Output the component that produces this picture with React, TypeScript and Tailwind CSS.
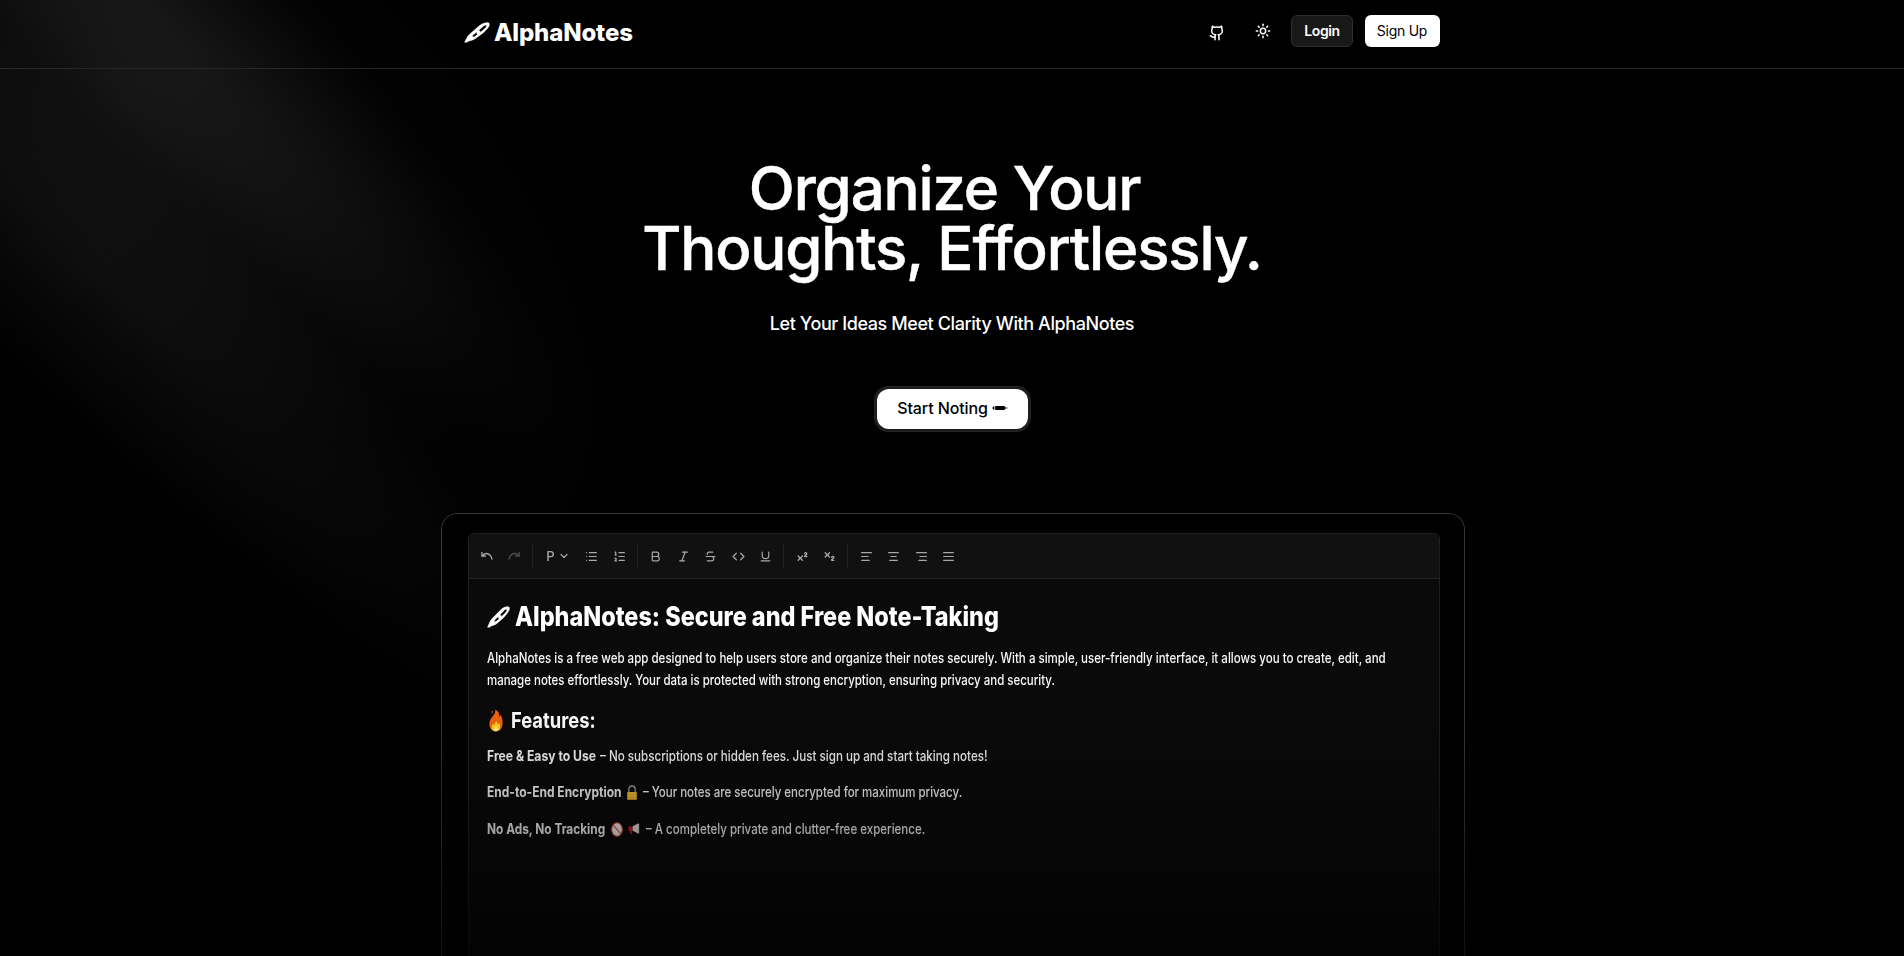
import type { ReactNode } from "react";
import {
  AlignCenter,
  AlignJustify,
  AlignLeft,
  AlignRight,
  Bold,
  ChevronDown,
  Code,
  Github,
  Italic,
  List,
  ListOrdered,
  Strikethrough,
  Subscript,
  Sun,
  Superscript,
  Underline,
} from "lucide-react";

function PenIcon({ className }: { className: string }) {
  return (
    <svg viewBox="0 0 26 21" preserveAspectRatio="none" className={className} aria-hidden="true">
      <path
        fill="currentColor"
        stroke="currentColor"
        strokeWidth="0.2"
        strokeLinejoin="round"
        fillRule="evenodd"
        d="M0.4 20.3L2.8 15.8C3.4 14.2 4.6 13 6 11.8L15.4 3.6C18.2 1.4 21.4 0.3 23.8 0.5C25.7 0.8 25.9 2.5 25.2 3.9C24 6.3 21.2 9.3 18.6 11.4L11 17C8.6 18.4 6.8 18.8 5.2 19L2.4 20.5ZM8.6 13.5C8.2 14.8 9.4 15.2 10.7 14.4L13.6 12.3C12.8 11.8 12.4 11.2 12.9 10ZM14.6 8.6C15.9 8.4 16.5 9.2 16.2 10.2L21 6.2C22.2 5 22.8 3.8 22.2 3.3C21.3 2.8 19.7 3.9 18.6 4.9Z"
      />
    </svg>
  );
}

function FlatPenIcon() {
  return (
    <svg viewBox="0 0 16 6" className="h-1.5 w-4" aria-hidden="true">
      <path fill="currentColor" d="M0.3 3L1.6 1.2H2.4V4.8H1.6Z" />
      <rect x="3.2" y="1" width="9.6" height="4" fill="currentColor" />
      <path fill="currentColor" d="M13 1.8L14 2.4V3.6L13 4.2Z" />
      <rect x="14.6" y="2.5" width="1" height="1" fill="currentColor" />
    </svg>
  );
}

function FlameIcon() {
  return (
    <svg viewBox="0 0 14 23" className="h-[23px] w-3.5" aria-hidden="true">
      <path
        fill="#f0620f"
        d="M6.3 0.5C9.6 2.2 10.6 5 10.3 7.9C11 7.3 11.3 6.4 11.3 5.4C13 8 13.8 11 13.6 14.2C13.4 19.2 11 22.4 7 22.4C2.8 22.4 0.4 19.4 0.4 15.2C0.4 11.8 1.8 9.8 3.4 7.8C5.4 5.4 6.8 3.6 6.3 0.5Z"
      />
      <path fill="#d84a1b" d="M3 1.6L4 2.4L3.4 4.6L2.4 3.4Z" />
      <path
        fill="#ffd21f"
        d="M7.6 12.2C8.4 13.4 8.2 14.8 8.4 15.6C9 15.4 9.4 14.8 9.6 14C10.8 15.2 11.4 16.6 11.2 18.2C10.8 20.8 9.2 22.3 7 22.3C4.6 22.3 2.8 20.8 2.7 18.4C2.7 16.9 3.3 15.7 4 14.8C4.3 15.6 4.7 16 5.2 16.2C5.4 14.6 6.2 13.2 7.6 12.2Z"
      />
      <path fill="#fff3a0" d="M7 17.6C8.4 18.6 9 19.6 8.8 20.8C8.4 21.8 7.8 22.2 7 22.2C6 22.2 5 21.6 5 20.6C5 19.4 6 18.6 7 17.6Z" />
    </svg>
  );
}

function LockIcon() {
  return (
    <svg viewBox="0 0 10 15" className="h-[15px] w-2.5" aria-hidden="true">
      <path d="M1.8 8V4.6C1.8 2.4 3 1 5 1S8.2 2.4 8.2 4.6V8" fill="none" stroke="#a5a5a0" strokeWidth="1.3" />
      <rect x="0.2" y="7" width="9.6" height="7.8" rx="0.6" fill="#f2bd31" />
      <rect x="0.2" y="9.6" width="9.6" height="0.5" fill="#d9a828" />
      <rect x="0.2" y="12.2" width="9.6" height="0.5" fill="#d9a828" />
    </svg>
  );
}

function BanIcon() {
  return (
    <svg viewBox="0 0 12 15" className="h-[15px] w-3" aria-hidden="true">
      <ellipse cx="6" cy="7.5" rx="5.3" ry="6.7" fill="#f4f0ee" stroke="#d8513f" strokeWidth="1.1" />
      <path d="M2.2 3.2L9.8 11.8" stroke="#d8513f" strokeWidth="1.1" />
    </svg>
  );
}

function MegaphoneIcon() {
  return (
    <svg viewBox="0 0 12 12" className="h-3 w-3" aria-hidden="true">
      <path fill="#e6e3e0" d="M4.4 3.6L10 0.6V10.4L4.4 7.6Z" />
      <rect x="10" y="0.6" width="1.2" height="9.9" fill="#c9c5c2" />
      <path fill="#d8142c" d="M0.4 3.4H4.4V7.8H3.8V11H2V7.8H0.4Z" />
    </svg>
  );
}

function UndoArrow({ className }: { className?: string }) {
  return (
    <svg viewBox="0 0 12 12" className={`size-3 ${className ?? ""}`} fill="none" stroke="currentColor" strokeWidth="1.3" aria-hidden="true">
      <path d="M0.9 2V6H4.9" />
      <path d="M1 6C3 3.6 6 3 8.4 4.6C10 5.7 10.9 7.4 11.1 9.6" />
    </svg>
  );
}

function Tool({ children }: { children: ReactNode }) {
  return <button className="flex h-6 w-[27.5px] items-center justify-center">{children}</button>;
}

function Divider() {
  return <span className="mx-1 h-6 w-px bg-[#222]" />;
}

const icon = "size-[13px]";

function Toolbar() {
  return (
    <div className="flex h-[45px] items-center border-b border-[#232323] bg-[#111] pl-[4.25px] text-[#a8a8a8]">
      <Tool><UndoArrow /></Tool>
      <Tool><UndoArrow className="-scale-x-100 text-[#505050]" /></Tool>
      <Divider />
      <button className="flex h-6 w-[41px] items-center gap-[3px] pl-[9.5px] text-[13px] leading-6 font-medium">
        P
        <ChevronDown className="size-3" strokeWidth={2.4} />
      </button>
      <Tool><List className={icon} strokeWidth={2.2} /></Tool>
      <Tool><ListOrdered className={icon} strokeWidth={2.2} /></Tool>
      <Divider />
      <Tool><Bold className={icon} strokeWidth={2.2} /></Tool>
      <Tool><Italic className={icon} strokeWidth={2.2} /></Tool>
      <Tool><Strikethrough className={icon} strokeWidth={2.2} /></Tool>
      <Tool><Code className={icon} strokeWidth={2.2} /></Tool>
      <Tool><Underline className={icon} strokeWidth={2.2} /></Tool>
      <Divider />
      <Tool><Superscript className={icon} strokeWidth={2.4} /></Tool>
      <Tool><Subscript className={icon} strokeWidth={2.4} /></Tool>
      <Divider />
      <Tool><AlignLeft className={icon} strokeWidth={2.2} /></Tool>
      <Tool><AlignCenter className={icon} strokeWidth={2.2} /></Tool>
      <Tool><AlignRight className={icon} strokeWidth={2.2} /></Tool>
      <Tool><AlignJustify className={icon} strokeWidth={2.2} /></Tool>
    </div>
  );
}

function Glow() {
  return (
    <div aria-hidden="true" className="pointer-events-none absolute inset-0 overflow-hidden">
      <div className="absolute top-0 left-0 h-[1280px] w-[560px] translate-y-[-350px] -rotate-45 rounded-full bg-[radial-gradient(68.54%_68.72%_at_55.02%_31.46%,hsla(0,0%,85%,.08)_0,hsla(0,0%,55%,.02)_50%,hsla(0,0%,45%,0)_80%)]" />
      <div className="absolute top-0 left-0 h-[1280px] w-[240px] -rotate-45 rounded-full bg-[radial-gradient(50%_50%_at_50%_50%,hsla(0,0%,85%,.06)_0,hsla(0,0%,45%,.02)_80%,transparent_100%)] [translate:5%_-50%]" />
      <div className="absolute top-0 left-0 h-[1280px] w-[240px] translate-y-[-350px] -rotate-45 bg-[radial-gradient(50%_50%_at_50%_50%,hsla(0,0%,85%,.04)_0,hsla(0,0%,45%,.02)_80%,transparent_100%)]" />
    </div>
  );
}

function Header() {
  return (
    <header className="h-[69px] border-b border-[#262626] pt-[15px]">
      <div className="mx-auto flex w-[976px] items-start justify-between">
        <a className="flex h-8 items-center gap-[4px]">
          <PenIcon className="mt-0.5 h-[21px] w-[26px]" />
          <span className="pt-1 text-2xl font-extrabold tracking-[-0.15px]">AlphaNotes</span>
        </a>
        <div className="flex h-8 items-center">
          <Github className="mt-[3px] size-4" strokeWidth={2.3} />
          <Sun className="ml-[30px] size-4" strokeWidth={2.2} />
          <button className="ml-5 h-8 w-[62px] rounded-md border border-[#2e2e2e] bg-[#181818] text-sm font-semibold tracking-[-0.4px]">
            Login
          </button>
          <button className="ml-3 h-8 w-[75px] rounded-md bg-white pr-px text-sm tracking-[-0.25px] text-black">Sign Up</button>
        </div>
      </div>
    </header>
  );
}

function Editor() {
  return (
    <div className="ml-px w-[1024px] rounded-t-2xl border border-b-0 border-[#363636] bg-black pt-[19px] pr-[24px] pl-[26px] [mask-image:linear-gradient(to_bottom,black_195px,transparent_560px)]">
      <div className="h-[440px] overflow-hidden rounded-t-md border border-[#1f1f1f] bg-[#0a0a0a]">
        <Toolbar />
        <div className="pt-[22px] pl-[18px] text-sm leading-[22px] font-medium whitespace-nowrap text-[#f8f8f8]">
          <h2 className="flex h-8 items-center text-[27px] leading-8 font-extrabold text-white">
            <PenIcon className="h-[22px] w-[23px]" />
            <span className="ml-[5px] w-max origin-left scale-x-[.867]">AlphaNotes: Secure and Free Note-Taking</span>
          </h2>
          <p className="mt-[14px]">
            <span className="block w-max origin-left scale-x-[.8235]">
              AlphaNotes is a free web app designed to help users store and organize their notes securely. With a simple,
              user-friendly interface, it allows you to create, edit, and
            </span>
            <span className="block w-max origin-left scale-x-[.819]">
              manage notes effortlessly. Your data is protected with strong encryption, ensuring privacy and security.
            </span>
          </p>
          <h3 className="mt-[15px] flex h-7 items-center pl-0.5 text-[22px] leading-7 font-bold text-white">
            <FlameIcon />
            <span className="ml-[8px] origin-left scale-x-[.835]">Features:</span>
          </h3>
          <p className="mt-[11px] flex">
            <span className="w-[113px] font-bold">
              <span className="block w-max origin-left scale-x-[.868]">Free &amp; Easy to Use</span>
            </span>
            <span className="origin-left scale-x-[.83]">– No subscriptions or hidden fees. Just sign up and start taking notes!</span>
          </p>
          <p className="mt-[14px] flex items-center">
            <span className="w-[140px] font-bold">
              <span className="block w-max origin-left scale-x-[.857]">End-to-End Encryption</span>
            </span>
            <LockIcon />
            <span className="ml-[6px] origin-left scale-x-[.82]">– Your notes are securely encrypted for maximum privacy.</span>
          </p>
          <p className="mt-[15px] flex items-center">
            <span className="w-[124px] font-bold">
              <span className="block w-max origin-left scale-x-[.848]">No Ads, No Tracking</span>
            </span>
            <BanIcon />
            <span className="ml-[5px]">
              <MegaphoneIcon />
            </span>
            <span className="ml-[6px] origin-left scale-x-[.823]">– A completely private and clutter-free experience.</span>
          </p>
        </div>
      </div>
    </div>
  );
}

export default function App() {
  return (
    <div className="relative isolate h-screen overflow-hidden bg-black font-[Inter,sans-serif] text-white">
      <Glow />
      <div className="relative">
        <Header />
        <main className="flex flex-col items-center pt-[89px]">
          <h1 className="text-center text-[60px] leading-[60px] font-medium tracking-[-1.15px] [-webkit-text-stroke:0.5px_white]">
            Organize Your&nbsp;
            <br />
            Thoughts, Effortlessly.
          </h1>
          <p className="mt-[32px] text-lg leading-7 font-medium tracking-[-0.41px]">Let Your Ideas Meet Clarity With AlphaNotes</p>
          <div className="mt-[48px] ml-px rounded-[14px] border border-[#262626] bg-[#1c1c1c] p-0.5">
            <button className="flex h-10 w-[151px] items-center justify-center gap-1 rounded-xl bg-white pb-0.5 text-base font-medium tracking-[-0.1px] text-black">
              Start Noting
              <FlatPenIcon />
            </button>
          </div>
          <div className="mt-[81px]">
            <Editor />
          </div>
        </main>
      </div>
    </div>
  );
}
